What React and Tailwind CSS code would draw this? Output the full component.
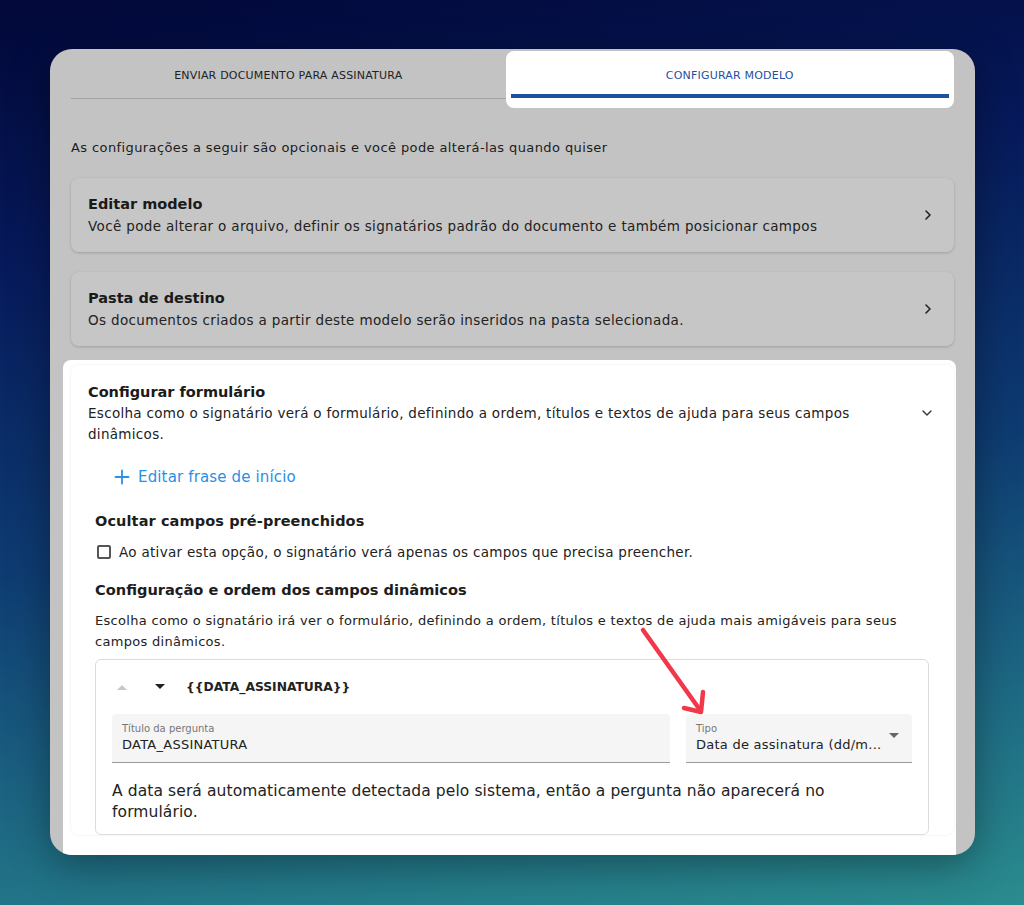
import React from "react";

const F = { fontFamily: '"DejaVu Sans", "Noto Sans", sans-serif' };

function ChevronRight() {
  return (
    <svg width="16" height="16" viewBox="0 0 24 24" fill="none" stroke="#222" strokeWidth="2.4" strokeLinecap="round" strokeLinejoin="round">
      <path d="M9 6l6 6-6 6" />
    </svg>
  );
}
function ChevronDown() {
  return (
    <svg width="16" height="16" viewBox="0 0 24 24" fill="none" stroke="#333" strokeWidth="2" strokeLinecap="round" strokeLinejoin="round">
      <path d="M6 9l6 6 6-6" />
    </svg>
  );
}
function Tri({ up, color }) {
  return (
    <svg width="12" height="8" viewBox="0 0 12 8">
      {up ? <path d="M1 7L6 2l5 5z" fill={color} /> : <path d="M1 1l5 5 5-5z" fill={color} />}
    </svg>
  );
}

export default function App() {
  return (
    <div
      className="relative w-[1024px] h-[905px] pt-[49px] pl-[50px] bg-[linear-gradient(172deg,#020838_0%,#06195a_25%,#0e3c72_55%,#1e6a84_80%,#2a8c8e_100%)]"
      style={F}
    >
      <div className="w-[925px] h-[806px] rounded-[22px] bg-[#c3c3c3] overflow-hidden px-[21px] shadow-[0_10px_40px_rgba(0,0,0,0.35)]">
        {/* Tabs */}
        <div className="flex mt-[2px] h-[57px]">
          <div className="w-[436px] h-[48px] border-b border-[#a3a3a3] flex items-center justify-center pt-[3px]">
            <span className="text-[11px] tracking-[0.2px] text-[#222]">ENVIAR DOCUMENTO PARA ASSINATURA</span>
          </div>
          <div className="w-[450px] h-[57px] bg-white rounded-[8px] px-[5px] flex flex-col">
            <div className="h-[43px] flex items-center justify-center pt-[8px]">
              <span className="text-[11px] tracking-[0.2px] text-[#1f4f9f]">CONFIGURAR MODELO</span>
            </div>
            <div className="h-[4px] bg-[#1f4f9f]" />
          </div>
        </div>

        <p className="mt-[29px] text-[13px] tracking-[0.4px] leading-[22px] text-[#1c1c1c]">
          As configurações a seguir são opcionais e você pode alterá-las quando quiser
        </p>

        {/* Card 1 */}
        <div className="mt-[19px] h-[74px] rounded-[8px] bg-[#c6c6c6] shadow-[0_1px_3px_rgba(0,0,0,0.18)] flex items-center pl-[17px] pr-[18px]">
          <div className="flex-1">
            <div className="text-[14.5px] font-bold leading-[22px] text-[#1a1a1a]">Editar modelo</div>
            <div className="text-[13.5px] tracking-[0.35px] leading-[22px] text-[#222]">
              Você pode alterar o arquivo, definir os signatários padrão do documento e também posicionar campos
            </div>
          </div>
          <ChevronRight />
        </div>

        {/* Card 2 */}
        <div className="mt-[20px] h-[74px] rounded-[8px] bg-[#c6c6c6] shadow-[0_1px_3px_rgba(0,0,0,0.18)] flex items-center pl-[17px] pr-[18px]">
          <div className="flex-1">
            <div className="text-[14.5px] font-bold leading-[22px] text-[#1a1a1a]">Pasta de destino</div>
            <div className="text-[13.5px] tracking-[0.35px] leading-[22px] text-[#222]">
              Os documentos criados a partir deste modelo serão inseridos na pasta selecionada.
            </div>
          </div>
          <ChevronRight />
        </div>

        {/* Highlighted section */}
        <div className="mt-[14px] -ml-[8px] -mr-[2px] bg-white rounded-t-[8px] pl-[8px] pr-[2px] pt-[5px] h-[500px]">
          <div className="rounded-[8px] shadow-[0_0_3px_rgba(0,0,0,0.08)] pl-[17px] pr-[19px] pt-[16px]">
            <div className="flex items-center">
              <div className="flex-1">
                <div className="text-[14.5px] font-bold leading-[22px] text-[#1a1a1a]">Configurar formulário</div>
                <div className="text-[13.5px] tracking-[0.3px] leading-[21px] text-[#222] w-[790px]">
                  Escolha como o signatário verá o formulário, definindo a ordem, títulos e textos de ajuda para seus campos dinâmicos.
                </div>
              </div>
              <ChevronDown />
            </div>

            <div className="mt-[20px] ml-[26px] flex items-center gap-[8px] text-[#2a8fe6]">
              <svg width="16" height="16" viewBox="0 0 16 16" stroke="#2a8fe6" strokeWidth="1.8" strokeLinecap="round">
                <path d="M8 1.5v13M1.5 8h13" />
              </svg>
              <span className="text-[15px] tracking-[0.15px] leading-[24px]">Editar frase de início</span>
            </div>

            <div className="ml-[7px] mt-[20px]">
              <div className="text-[14.5px] tracking-[0.1px] font-bold leading-[24px] text-[#1d1d1d]">Ocultar campos pré-preenchidos</div>
              <div className="mt-[9px] flex items-center gap-[8px]">
                <div className="w-[14px] h-[14px] border-[2px] border-[#555] rounded-[2px] ml-[2px]" />
                <span className="text-[13.5px] tracking-[0.3px] leading-[20px] text-[#222]">
                  Ao ativar esta opção, o signatário verá apenas os campos que precisa preencher.
                </span>
              </div>

              <div className="mt-[16px] text-[14.6px] font-bold leading-[24px] text-[#1d1d1d]">
                Configuração e ordem dos campos dinâmicos
              </div>
              <div className="mt-[8px] text-[13px] tracking-[0.3px] leading-[21px] text-[#222] w-[815px]">
                Escolha como o signatário irá ver o formulário, definindo a ordem, títulos e textos de ajuda mais amigáveis para seus campos dinâmicos.
              </div>

              <div className="mt-[7px] w-[834px] border border-[#dcdcdc] rounded-[6px] px-[16px] pb-[11px]">
                <div className="h-[54px] flex items-center">
                  <span className="ml-[4px]"><Tri up color="#c8c8c8" /></span>
                  <span className="ml-[26px]"><Tri color="#222" /></span>
                  <span className="ml-[20px] text-[12.3px] font-bold text-[#222]">{"{{DATA_ASSINATURA}}"}</span>
                </div>
                <div className="flex gap-[16px]">
                  <div className="w-[558px] h-[49px] bg-[#f5f5f5] border-b border-[#9a9a9a] rounded-t-[4px] px-[10px] pt-[8px]">
                    <div className="text-[10px] leading-[13px] text-[#777]">Título da pergunta</div>
                    <div className="text-[13px] tracking-[0.25px] leading-[20px] text-[#222]">DATA_ASSINATURA</div>
                  </div>
                  <div className="w-[226px] h-[49px] bg-[#f5f5f5] border-b border-[#9a9a9a] rounded-t-[4px] pl-[10px] pr-[12px] pt-[8px] flex">
                    <div className="flex-1 min-w-0">
                      <div className="text-[10px] leading-[13px] text-[#777]">Tipo</div>
                      <div className="text-[13px] tracking-[0.25px] leading-[20px] text-[#222] whitespace-nowrap">Data de assinatura (dd/m...</div>
                    </div>
                    <div className="pt-[10px]"><Tri color="#666" /></div>
                  </div>
                </div>
                <div className="mt-[18px] text-[15.5px] tracking-[0.1px] leading-[21px] text-[#222] w-[740px]">
                  A data será automaticamente detectada pelo sistema, então a pergunta não aparecerá no formulário.
                </div>
              </div>
            </div>
          </div>
        </div>
      </div>

      {/* Red annotation arrow */}
      <svg className="absolute left-[630px] top-[620px]" width="90" height="100" viewBox="0 0 90 100" fill="none">
        <path d="M13 10L70 90" stroke="#f0384a" strokeWidth="4.5" strokeLinecap="round" />
        <path d="M54 88L71 92L73 72" stroke="#f0384a" strokeWidth="4.5" strokeLinecap="round" strokeLinejoin="round" />
      </svg>
    </div>
  );
}
